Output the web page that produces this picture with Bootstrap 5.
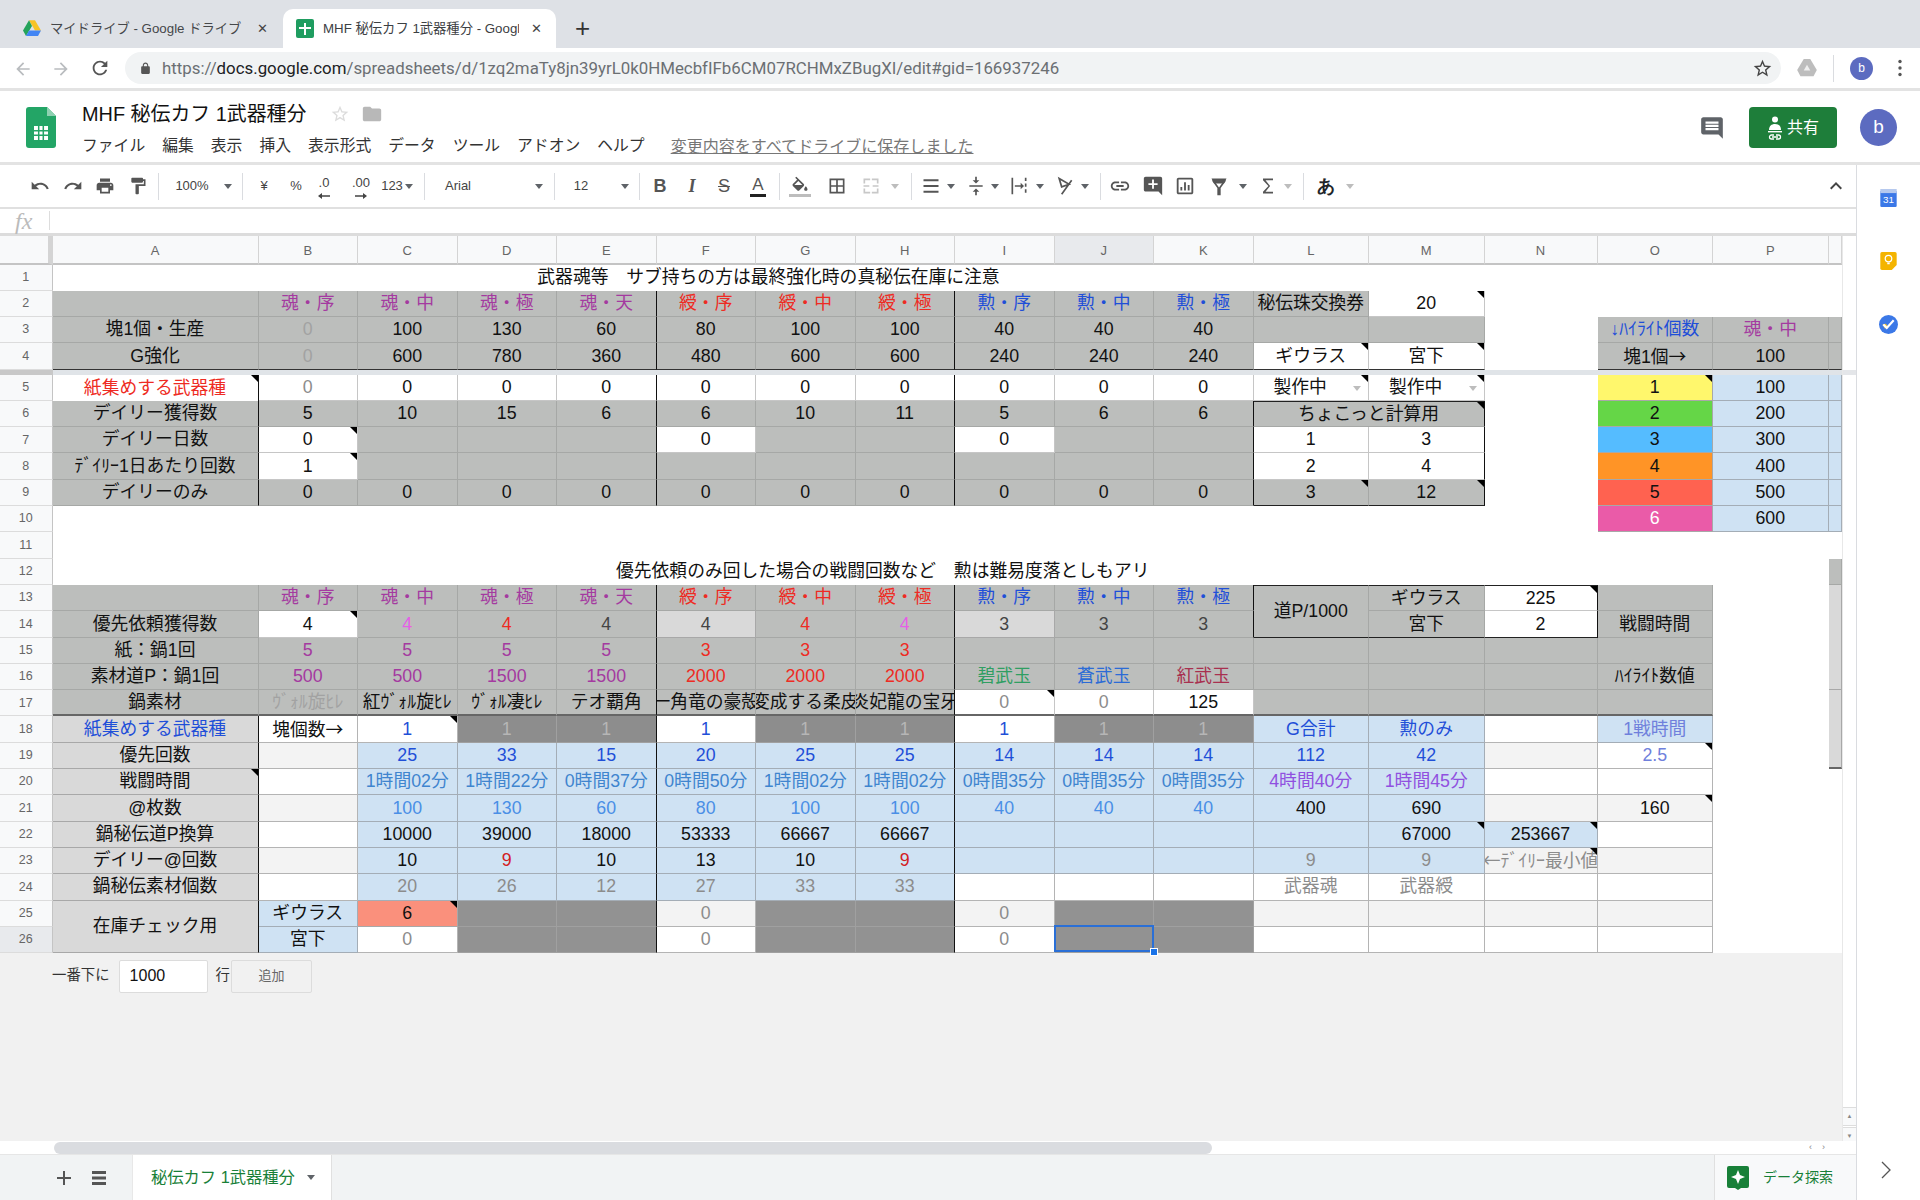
<!DOCTYPE html>
<html lang="ja"><head><meta charset="utf-8"><title>MHF 秘伝カフ 1武器種分</title>
<link href="https://cdn.jsdelivr.net/npm/bootstrap@5.3.0/dist/css/bootstrap.min.css" rel="stylesheet">
<style>
html,body{margin:0;height:1200px;width:1920px;overflow:hidden;background:#fff}
body{font-family:"Liberation Sans","Noto Sans CJK JP",sans-serif;color:#202124}
.tabstrip{height:48px;background:#dee1e6;padding-left:5px}
.btab{height:39px;margin-top:9px;width:273px;color:#45474a;font-size:13.3px;padding-left:13px;position:relative}
.btab.on{background:#fff;border-radius:10px 10px 0 0;color:#3c4043}
.btab .tt{width:196px;overflow:hidden;white-space:nowrap;margin-left:9px}
.btab .xx{margin-left:12px;font-size:13px;color:#444}
.tab1{width:278px;padding-left:18px}
.tab1 .tt{width:195px;margin-left:9px}
.plus{font-size:26px;color:#333;margin-left:19px;margin-top:9px;line-height:39px}
.addr{height:43px;border-bottom:3px solid #e3e3e3;padding-left:13px}
.omni{width:1656px;height:32px;background:#f1f3f4;border-radius:16px;margin-left:14px;padding-left:14px;font-size:16.85px;color:#6b6f73;font-family:Roboto,"Liberation Sans",sans-serif}
.omni b{font-weight:400;color:#202124}
.omurl{padding-top:1px;margin-left:2px}
.omstar{margin-right:8px}
.navb{width:38px}
.dochead{height:74px;border-bottom:3px solid #e3e3e3;padding-left:26px;position:relative}
.titl{font-size:19.9px;line-height:26px;color:#111;white-space:nowrap}
.fold{margin-left:11px}
.mnu{font-size:15.8px;color:#333;line-height:20px;margin-top:9px;white-space:nowrap}
.headcol{margin-left:26px;padding-top:10px;flex:1 1 auto}
.mi1{margin-right:17px}
.saved{color:#777;text-decoration:underline;margin-left:26px;font-size:16.05px}
.sharebtn{width:88px;height:41px;background:#1e7e3a;border:0;color:#fff;font-size:16px;border-radius:4px;margin-left:24px}
.ava{width:37px;height:37px;border-radius:50%;background:#5c6bc0;color:#fff;font-size:19px;margin-left:23px;margin-right:23px}
.ava2{width:23px;height:23px;border-radius:50%;background:#5c6bc0;color:#fff;font-size:12px}
.lower{height:1035px}
.leftpane{width:1856px;flex:none}
.sidebar{width:64px;border-left:1px solid #dadce0;position:relative;padding-top:24px}
.toolb{height:44px;border-bottom:2px solid #e0e0e0;font-size:13px;color:#444;font-family:"Liberation Sans",sans-serif}
.ti{width:0;flex:none;display:flex;justify-content:center;align-items:center;white-space:nowrap}
.ti>*{flex:none}
.d14{margin-left:14px}.d15{margin-left:15px}.d16{margin-left:16px}.d17{margin-left:17px}.d19{margin-left:19px}.d20{margin-left:20px}.d21{margin-left:21px}.d22{margin-left:22px}.d23{margin-left:23px}.d24{margin-left:24px}.d25{margin-left:25px}.d27{margin-left:27px}.d28{margin-left:28px}.d31{margin-left:31px}.d32{margin-left:32px}.d33{margin-left:33px}.d34{margin-left:34px}.d36{margin-left:36px}.d37{margin-left:37px}.d40{margin-left:40px}.d44{margin-left:44px}.d81{margin-left:81px}.d486{margin-left:486px}
.spl{display:block;width:1px;height:27px;background:#dadce0}
.ar{display:block;flex:none;width:0;height:0;border-left:4px solid transparent;border-right:4px solid transparent;border-top:5px solid #5f6368}
.ar.lt{border-top-color:#bdbdbd}
.fsb{font-weight:700;font-size:18px;color:#555}
.fsi{font-style:italic;font-size:18px;font-family:"Liberation Serif",serif;font-weight:700;color:#555}
.fss{font-size:18px;text-decoration:line-through;color:#555}
.fsa{font-size:17px;color:#555;border-bottom:3px solid #222;line-height:18px;padding:0 2px}
.fx{height:26.5px;border-bottom:3px solid #dcdcdc;padding-left:15px;font-family:"Liberation Serif",serif;font-style:italic;font-size:24px;color:#bbb}
.fxsep{width:1px;height:19px;background:#ddd;margin-left:17px}
.body2{height:905.5px}
.area{width:1842px;flex:none;background:#f1f1f1}
.vsc{width:14px;flex:none;background:#fff;border-left:1px solid #e8e8e8;font-size:6px;color:#888;text-align:center}
.vband{height:5.5px;background:#e4e6e9;margin-top:134px;margin-bottom:732px}
.varr{height:19px;line-height:17px;border-top:1px solid #ddd;border-bottom:1px solid #ddd;background:#f8f9fa;margin-bottom:1px}
#sh{width:1842px;table-layout:fixed;border-collapse:separate;border-spacing:0;background:#fff;font-size:17.8px;color:#111}
.ch{width:52.5px}.ca{width:206px}.cb{width:99.5px}.cl{width:115.5px}.cn{width:113px}.cq{width:13.5px}
#sh tr{height:26.3px}
#sh tr.hd{height:29px}
#sh tr.r5{height:25.7px}
#sh tr.frz{height:5.5px}
#sh td{padding:1px 0 0;overflow:hidden;white-space:nowrap;text-align:center;vertical-align:middle;line-height:1;border-right:1px solid #a6a8a6;border-bottom:1px solid #a6a8a6;background-clip:padding-box}
#sh th{font-weight:400;font-size:12.5px;color:#666;background:#f8f9fa;text-align:center;border-right:1px solid #c4c4c4;border-bottom:1px solid #dcdcdc;padding:0;line-height:1}
#sh tr.hd th{font-size:13px;border-bottom:2px solid #c4c4c4;border-right-color:#d4d4d4;padding-top:2px}
#sh th.corner{border-right:5px solid #bdbdbd;background:#f8f9fa}
#sh th.act{background:#e8eaed}
#sh tr.frz th{background:#c8c8c8;border:0}
#sh tr.frz td{background:#e0e4e8;border:0;padding:0}
#sh td.g{background:#bcbebc}
#sh td.w{background:#fff;border-color:#c6c6c6}
#sh td.n{background:#fff;border:0}
#sh td.lb{background:#cfe2f3;border-color:#a4adb6}
#sh td.lg{background:#d9d9d9;border-color:#a8a8a8}
#sh td.f3{background:#f3f3f3;border-color:#b4b4b4}
#sh td.wb{background:#fff;border-color:#b4b4b4}
#sh td.dk{background:#929292;border-color:#a0a0a0;color:#b6b6b6}
#sh td.dkk{background:#8d8d8d;border-color:#a0a0a0;color:#b6b6b6}
#sh td.sal{background:#fa907c;border-color:#a8a8a8}
#sh td.yel{background:#fff76c;border-color:#a8a8a8}
#sh td.grn{background:#65d647;border-color:#a8a8a8}
#sh td.sky{background:#55bcff;border-color:#a8a8a8}
#sh td.org{background:#ff9426;border-color:#a8a8a8}
#sh td.red2{background:#ff6250;border-color:#a8a8a8}
#sh td.pnk{background:#ea5ba8;border-color:#a8a8a8;color:#fff}
#sh td.xr{border-right:1.5px solid #111}
#sh td.xb{border-bottom:1.5px solid #222}
#sh td.xt{border-top:1.5px solid #222}
#sh tr.ub td:not(.n){border-bottom:1.5px solid #333}
#sh tr.ub2 td:not(.n){border-bottom:2px solid #666}
.cj{font-family:"Noto Sans CJK JP",sans-serif}
.pu{color:#a43aa0}.rd{color:#ee2b23}.bl{color:#1f4fd8}.cf{color:#4a8fe6}.tm{color:#3f85cf}.vi{color:#9050e0}.pk{color:#e55fe6}.mg{color:#8c8c8c}.ggy{color:#a2a2a2}.dg{color:#444}.gr{color:#2f9e62}.sb{color:#2b6bd6}.cr2{color:#a8304f}.per{color:#6f80dc}.r9{color:#d3201f}
.cr{position:relative}
.cr::after{content:"";position:absolute;top:0;right:0;border-top:7px solid #000;border-left:7px solid transparent}
.ovf{display:flex;justify-content:center}
.ovf span{flex:none}
.dd{padding:0 7px 0 20px}
#sh td.sel{position:relative;overflow:visible}
.selb{position:absolute;left:-1px;top:-2px;right:-1px;bottom:0;border:2.5px solid #2a6fd6;z-index:3}
.selh{position:absolute;right:-5px;bottom:-4px;width:8px;height:8px;background:#1a73e8;border:1px solid #fff;z-index:4}
.addrow{height:33px;margin-top:6.5px;padding-left:52px;font-size:14.4px;color:#333}
.addinp{width:89px;height:33px;margin-left:9px;border:1px solid #dcdcdc;background:#fff;padding:0 0 0 10px;border-radius:2px;font-size:16px;color:#111;font-family:"Liberation Sans",sans-serif}
.addbtn{width:81px;height:33px;background:#f1f1f1;border:1px solid #dcdcdc;border-radius:2px;color:#666;font-size:13px;padding:0;margin-left:1px}
.hsc{height:13px;background:#fff;position:relative;padding-left:54px}
.hsc .thumb{display:block;width:1158px;height:12px;border-radius:6px;background:#dadce0;margin-top:1px}
.hscl{font-size:9px;color:#888;margin-left:597px}
.tabsb{height:46px;background:#f1f3f4;border-top:1px solid #e6e6e6;padding-left:57px;font-size:16.3px;color:#188038}
.rowi{margin-left:20px}
.shtab{width:200px;height:46px;background:#fff;margin-left:25px;padding-left:18px;white-space:nowrap;border-right:1px solid #e0e0e0;border-left:1px solid #e8e8e8}
.shtab .ar{margin-left:12px}
.expl{width:142px;height:46px;background:#f8f9fa;border-left:1px solid #e0e0e0;font-size:14px;padding-left:12px;margin-left:auto;white-space:nowrap}
.explico{margin-right:14px}
.sideic{display:block;margin:0 auto 45px}
.chev{position:absolute;bottom:20px;left:23px}
</style></head><body>

<div class="tabstrip d-flex">
 <div class="btab tab1 d-flex align-items-center">
  <svg width="18" height="17" viewBox="0 0 24 22"><path fill="#f7c325" d="M8 0h8l8 13.500h-8z"/><path fill="#24a35a" d="M8 0L0 13.500 4 21l8-13.500z"/><path fill="#4285f4" d="M4 21h16l4-7.500H8z"/></svg>
  <span class="tt">マイドライブ - Google ドライブ</span><span class="xx">✕</span>
 </div>
 <div class="btab on d-flex align-items-center">
  <svg width="18" height="19" viewBox="0 0 18 19"><rect width="18" height="19" rx="2" fill="#1f9d60"/><path fill="#fff" d="M8 4h2v4h5v2h-5v6H8v-6H3V8h5z"/></svg>
  <span class="tt">MHF 秘伝カフ 1武器種分 - Google</span><span class="xx">✕</span>
 </div>
 <span class="plus">+</span>
</div>

<div class="addr d-flex align-items-center">
 <span class="navb"><svg width="20" height="20" viewBox="0 0 24 24" fill="#b9bcbf"><path d="M20 11H7.830l5.590-5.590L12 4l-8 8 8 8 1.410-1.410L7.830 13H20v-2z"/></svg></span>
 <span class="navb"><svg width="20" height="20" viewBox="0 0 24 24" fill="#b9bcbf"><path d="M12 4l-1.410 1.410L16.170 11H4v2h12.170l-5.580 5.590L12 20l8-8z"/></svg></span>
 <svg width="22" height="22" viewBox="0 0 24 24" fill="#555"><path d="M17.650 6.350C16.200 4.900 14.210 4 12 4c-4.420 0-7.990 3.580-7.990 8s3.570 8 7.990 8c3.730 0 6.840-2.550 7.730-6h-2.080c-.82 2.330-3.040 4-5.650 4-3.310 0-6-2.690-6-6s2.690-6 6-6c1.660 0 3.140.69 4.220 1.780L13 11h7V4l-2.350 2.350z"/></svg>
 <div class="omni d-flex align-items-center">
  <svg width="13" height="13" viewBox="0 0 24 24" fill="#555" class="me-2"><path d="M18 8h-1V6c0-2.760-2.240-5-5-5S7 3.240 7 6v2H6c-1.100 0-2 .9-2 2v10c0 1.100.9 2 2 2h12c1.100 0 2-.9 2-2V10c0-1.100-.9-2-2-2zm-3 0H9V6c0-1.660 1.340-3 3-3s3 1.340 3 3v2z"/></svg>
  <span class="flex-grow-1 omurl">https://<b>docs.google.com</b>/spreadsheets/d/1zq2maTy8jn39yrL0k0HMecbfIFb6CM07RCHMxZBugXI/edit#gid=166937246</span>
  <svg width="21" height="21" viewBox="0 0 24 24" fill="#444" class="omstar"><path d="M22 9.240l-7.190-.62L12 2 9.190 8.630 2 9.240l5.460 4.730L5.820 21 12 17.270 18.180 21l-1.630-7.030L22 9.240zM12 15.400l-3.760 2.270 1-4.280-3.320-2.880 4.380-.38L12 6.100l1.710 4.040 4.380.38-3.320 2.880 1 4.280L12 15.400z"/></svg>
 </div>
 <svg width="20" height="18" viewBox="0 0 24 22" class="ms-3"><path fill="#bdbdbd" d="M8 0h8l8 13.500-4 7.500H4l-4-7.500z"/><path fill="#efefef" d="M12 7l-4 7h8z"/></svg>
 <span class="spl ms-3"></span>
 <span class="ava2 d-flex align-items-center justify-content-center ms-3">b</span>
 <svg width="6" height="18" viewBox="0 0 6 18" fill="#555" class="ms-4"><circle cx="3" cy="2.500" r="1.700"/><circle cx="3" cy="9" r="1.700"/><circle cx="3" cy="15.500" r="1.700"/></svg>
</div>

<div class="dochead d-flex align-items-start">
 <svg width="30" height="41" viewBox="0 0 30 41" class="mt-3"><path fill="#23a566" d="M3 0h18l9 9v29a3 3 0 0 1-3 3H3a3 3 0 0 1-3-3V3a3 3 0 0 1 3-3z"/><path fill="#8ed1b1" d="M21 0l9 9h-9z"/><path fill="#fff" d="M8 19h14v14H8z"/><path stroke="#23a566" stroke-width="1.500" d="M12.700 19v14M17.300 19v14M8 23.700h14M8 28.300h14"/></svg>
 <div class="headcol">
  <div class="titl d-flex align-items-center">MHF 秘伝カフ 1武器種分
   <svg width="20" height="20" viewBox="0 0 24 24" fill="#dcdcdc" class="ms-4"><path d="M22 9.240l-7.190-.62L12 2 9.190 8.630 2 9.240l5.460 4.730L5.820 21 12 17.270 18.180 21l-1.630-7.030L22 9.240zM12 15.400l-3.760 2.270 1-4.280-3.320-2.880 4.380-.38L12 6.100l1.710 4.040 4.380.38-3.320 2.880 1 4.280L12 15.400z"/></svg>
   <svg width="22" height="22" viewBox="0 0 24 24" fill="#b8b8b8" class="fold"><path d="M10 4H4c-1.100 0-1.990.9-1.990 2L2 18c0 1.100.9 2 2 2h16c1.100 0 2-.9 2-2V8c0-1.100-.9-2-2-2h-8l-2-2z"/></svg>
  </div>
  <div class="mnu d-flex"><span class="mi1">ファイル</span><span class="mi1">編集</span><span class="mi1">表示</span><span class="mi1">挿入</span><span class="mi1">表示形式</span><span class="mi1">データ</span><span class="mi1">ツール</span><span class="mi1">アドオン</span><span>ヘルプ</span><span class="saved">変更内容をすべてドライブに保存しました</span></div>
 </div>
 <div class="d-flex align-items-center mt-3">
  <svg width="26" height="26" viewBox="0 0 24 24" fill="#5f6368"><path d="M21.990 4c0-1.100-.89-2-1.990-2H4c-1.100 0-2 .9-2 2v12c0 1.100.9 2 2 2h14l4 4-.01-18zM18 14H6v-2h12v2zm0-3H6V9h12v2zm0-3H6V6h12v2z"/></svg>
  <button class="sharebtn d-flex align-items-center justify-content-center gap-1"><svg width="16" height="24" viewBox="0 0 16 24" fill="#fff"><circle cx="8" cy="3.500" r="3"/><path d="M2 14c0-4 2.500-6 6-6s6 2 6 6z"/><rect x="1" y="15" width="14" height="1.400"/><path fill="none" stroke="#fff" stroke-width="1.300" d="M7 19h-2.500a2 2 0 0 0 0 4H7M9 19h2.500a2 2 0 0 1 0 4H9M5 21h6"/></svg>共有</button>
  <span class="ava d-flex align-items-center justify-content-center">b</span>
 </div>
</div>

<div class="lower d-flex">
 <div class="leftpane">
  <div class="toolb d-flex align-items-center">
   <span class="ti d40"><svg width="20" height="20" viewBox="0 0 24 24" fill="#555"><path d="M12.500 8c-2.650 0-5.050.99-6.900 2.600L2 7v9h9l-3.620-3.620c1.390-1.160 3.160-1.880 5.120-1.880 3.540 0 6.550 2.310 7.600 5.500l2.370-.78C21.080 11.030 17.150 8 12.500 8z"/></svg></span>
   <span class="ti d33"><svg width="20" height="20" viewBox="0 0 24 24" fill="#555"><path d="M18.400 10.600C16.550 8.990 14.150 8 11.500 8c-4.650 0-8.580 3.030-9.960 7.220L3.900 16c1.050-3.190 4.050-5.500 7.600-5.500 1.950 0 3.730.72 5.120 1.880L13 16h9V7l-3.600 3.600z"/></svg></span>
   <span class="ti d32"><svg width="20" height="20" viewBox="0 0 24 24" fill="#555"><path d="M19 8H5c-1.660 0-3 1.340-3 3v6h4v4h12v-4h4v-6c0-1.660-1.340-3-3-3zm-3 11H8v-5h8v5zm3-7c-.55 0-1-.45-1-1s.45-1 1-1 1 .45 1 1-.45 1-1 1zm-1-9H6v4h12V3z"/></svg></span>
   <span class="ti d33"><svg width="20" height="20" viewBox="0 0 24 24" fill="#555"><path d="M18 4V3c0-.55-.45-1-1-1H5c-.55 0-1 .45-1 1v4c0 .55.45 1 1 1h12c.55 0 1-.45 1-1V6h1v4H9v11c0 .55.45 1 1 1h2c.55 0 1-.45 1-1v-9h8V4h-3z"/></svg></span>
   <span class="ti d20"><span class="spl"></span></span>
   <span class="ti d34">100%</span>
   <span class="ti d36"><span class="ar"></span></span>
   <span class="ti d14"><span class="spl"></span></span>
   <span class="ti d22">¥</span>
   <span class="ti d32">%</span>
   <span class="ti d28 flex-column"><span>.0</span><svg width="12" height="6" viewBox="0 0 12 6" fill="#444"><path d="M12 2.300H4V0L0 3l4 3V3.700h8z"/></svg></span>
   <span class="ti d37 flex-column"><span>.00</span><svg width="12" height="6" viewBox="0 0 12 6" fill="#444"><path d="M0 2.300h8V0l4 3-4 3V3.700H0z"/></svg></span>
   <span class="ti d31">123</span>
   <span class="ti d17"><span class="ar"></span></span>
   <span class="ti d15"><span class="spl"></span></span>
   <span class="ti d34">Arial</span>
   <span class="ti d81"><span class="ar"></span></span>
   <span class="ti d15"><span class="spl"></span></span>
   <span class="ti d27">12</span>
   <span class="ti d44"><span class="ar"></span></span>
   <span class="ti d14"><span class="spl"></span></span>
   <span class="ti d21 fsb">B</span>
   <span class="ti d32 fsi">I</span>
   <span class="ti d32 fss">S</span>
   <span class="ti d34"><span class="fsa">A</span></span>
   <span class="ti d21"><span class="spl"></span></span>
   <span class="ti d21 flex-column"><svg width="20" height="18" viewBox="0 0 24 20" fill="#555"><path d="M16.560 8.940L7.620 0 6.210 1.410l2.380 2.380-5.150 5.150c-.59.59-.59 1.540 0 2.120l5.500 5.500c.29.29.68.44 1.060.44s.77-.15 1.060-.44l5.500-5.500c.59-.58.59-1.530 0-2.120zM5.210 10L10 5.210 14.790 10H5.210zM19 11.500s-2 2.170-2 3.500c0 1.100.9 2 2 2s2-.9 2-2c0-1.330-2-3.500-2-3.500z"/></svg><svg width="22" height="3"><rect width="22" height="3" fill="#bdbdbd"/></svg></span>
   <span class="ti d37"><svg width="20" height="20" viewBox="0 0 24 24" fill="#555"><path d="M3 3v18h18V3H3zm8 16H5v-6h6v6zm0-8H5V5h6v6zm8 8h-6v-6h6v6zm0-8h-6V5h6v6z"/></svg></span>
   <span class="ti d34"><svg width="20" height="20" viewBox="0 0 24 24" fill="#c8c8c8"><path d="M3 3h8v2H5v4H3zm10 0h8v6h-2V5h-6zM3 15h2v4h6v2H3zm16 0h2v6h-8v-2h6zM3 11h7v2H3zm11 0h7v2h-7z"/></svg></span>
   <span class="ti d24"><span class="ar lt"></span></span>
   <span class="ti d16"><span class="spl"></span></span>
   <span class="ti d20"><svg width="20" height="20" viewBox="0 0 24 24" fill="#555"><path d="M3 4h18v2.400H3zM3 10.800h18v2.400H3zM3 17.600h18V20H3z"/></svg></span>
   <span class="ti d20"><span class="ar"></span></span>
   <span class="ti d25"><svg width="20" height="22" viewBox="0 0 24 24" fill="#555"><path d="M8 19h3v4h2v-4h3l-4-4-4 4zm8-14h-3V1h-2v4H8l4 4 4-4zM4 11v2h16v-2H4z"/></svg></span>
   <span class="ti d19"><span class="ar"></span></span>
   <span class="ti d24"><svg width="20" height="22" viewBox="0 0 24 24" fill="#555"><path d="M3 2h2v20H3zM19 2h2v4h-2zM19 9h2v4h-2zM19 16h2v4h-2zM7 11h7V8l4 4-4 4v-3H7z"/></svg></span>
   <span class="ti d21"><span class="ar"></span></span>
   <span class="ti d25"><svg width="20" height="22" viewBox="0 0 24 24" fill="none" stroke="#555" stroke-width="2"><path d="M5 3l12 7-9 3zM20 5L8 22"/></svg></span>
   <span class="ti d20"><span class="ar"></span></span>
   <span class="ti d15"><span class="spl"></span></span>
   <span class="ti d20"><svg width="22" height="22" viewBox="0 0 24 24" fill="#555"><path d="M3.900 12c0-1.710 1.390-3.100 3.100-3.100h4V7H7c-2.760 0-5 2.240-5 5s2.240 5 5 5h4v-1.900H7c-1.710 0-3.100-1.390-3.100-3.100zM8 13h8v-2H8v2zm9-6h-4v1.900h4c1.710 0 3.100 1.390 3.100 3.100s-1.390 3.100-3.100 3.100h-4V17h4c2.760 0 5-2.240 5-5s-2.240-5-5-5z"/></svg></span>
   <span class="ti d33"><svg width="22" height="24" viewBox="0 0 24 24" fill="#555"><path d="M21.990 4c0-1.100-.89-2-1.990-2H4c-1.100 0-2 .9-2 2v12c0 1.100.9 2 2 2h14l4 4-.01-18zM17 11h-4v4h-2v-4H7V9h4V5h2v4h4v2z"/></svg></span>
   <span class="ti d32"><svg width="22" height="22" viewBox="0 0 24 24" fill="#555"><path d="M19 3H5c-1.100 0-2 .9-2 2v14c0 1.100.9 2 2 2h14c1.100 0 2-.9 2-2V5c0-1.100-.9-2-2-2zm0 16H5V5h14v14zM7 13h2v4H7zM11 8h2v9h-2zM15 11h2v6h-2z"/></svg></span>
   <span class="ti d34"><svg width="20" height="22" viewBox="0 0 24 24"><path fill="#555" d="M3 3h18l-3 6H6z"/><path fill="none" stroke="#555" stroke-width="2" d="M4.500 5l6.500 9v8h2v-8l6.500-9"/></svg></span>
   <span class="ti d24"><span class="ar"></span></span>
   <span class="ti d25"><svg width="20" height="22" viewBox="0 0 24 24" fill="#555"><path d="M18 3H6v2l6.500 7L6 19v2h12v-2h-9l5.500-7L9 5h9z"/></svg></span>
   <span class="ti d20"><span class="ar lt"></span></span>
   <span class="ti d15"><span class="spl"></span></span>
   <span class="ti d23 fsb"><span class="text-dark">あ</span></span>
   <span class="ti d24"><span class="ar lt"></span></span>
   <span class="ti d486"><svg width="24" height="24" viewBox="0 0 24 24" fill="#444"><path d="M7.410 15.410L12 10.830l4.590 4.580L18 14l-6-6-6 6z"/></svg></span>
  </div>
  <div class="fx d-flex align-items-center"><span>fx</span><span class="fxsep"></span></div>
  <div class="body2 d-flex">
   <div class="area">
    <table id="sh">
     <colgroup><col class="ch"><col class="ca"><col class="cb"><col class="cb"><col class="cb"><col class="cb"><col class="cb"><col class="cb"><col class="cb"><col class="cb"><col class="cb"><col class="cb"><col class="cl"><col class="cl"><col class="cn"><col class="cl"><col class="cl"><col class="cq"></colgroup>
     <tr class="hd"><th class="corner"></th><th>A</th><th>B</th><th>C</th><th>D</th><th>E</th><th>F</th><th>G</th><th>H</th><th>I</th><th class="act">J</th><th>K</th><th>L</th><th>M</th><th>N</th><th>O</th><th>P</th><th></th></tr>
     <tr><th>1</th><td class="n" colspan="13">武器魂等　サブ持ちの方は最終強化時の真秘伝在庫に注意</td><td class="n"></td><td class="n"></td><td class="n"></td><td class="n"></td></tr>
     <tr><th>2</th><td class="g"></td><td class="g pu">魂・序</td><td class="g pu">魂・中</td><td class="g pu">魂・極</td><td class="g pu xr">魂・天</td><td class="g rd">綬・序</td><td class="g rd">綬・中</td><td class="g rd xr">綬・極</td><td class="g bl">勲・序</td><td class="g bl">勲・中</td><td class="g bl">勲・極</td><td class="g">秘伝珠交換券</td><td class="w cr">20</td><td class="n"></td><td class="n"></td><td class="n"></td><td class="n"></td></tr>
     <tr><th>3</th><td class="g">塊1個・生産</td><td class="g ggy">0</td><td class="g">100</td><td class="g">130</td><td class="g xr">60</td><td class="g">80</td><td class="g">100</td><td class="g xr">100</td><td class="g">40</td><td class="g">40</td><td class="g">40</td><td class="g"></td><td class="g"></td><td class="n"></td><td class="g bl">↓ﾊｲﾗｲﾄ個数</td><td class="g pu">魂・中</td><td class="g"></td></tr>
     <tr class="ub"><th>4</th><td class="g">G強化</td><td class="g ggy">0</td><td class="g">600</td><td class="g">780</td><td class="g xr">360</td><td class="g">480</td><td class="g">600</td><td class="g xr">600</td><td class="g">240</td><td class="g">240</td><td class="g">240</td><td class="w cr">ギウラス</td><td class="w cr">宮下</td><td class="n"></td><td class="g">塊1個<span class="cj">→</span></td><td class="g">100</td><td class="g"></td></tr>
     <tr class="frz"><th></th><td colspan="17"></td></tr>
     <tr class="r5"><th>5</th><td class="n rd cr xr">紙集めする武器種</td><td class="w mg">0</td><td class="w">0</td><td class="w">0</td><td class="w xr">0</td><td class="w">0</td><td class="w">0</td><td class="w xr">0</td><td class="w">0</td><td class="w">0</td><td class="w">0</td><td class="w cr"><div class="dd d-flex justify-content-between align-items-center"><span>製作中</span><span class="ar lt"></span></div></td><td class="w cr"><div class="dd d-flex justify-content-between align-items-center"><span>製作中</span><span class="ar lt"></span></div></td><td class="n"></td><td class="yel cr">1</td><td class="lb">100</td><td class="lb"></td></tr>
     <tr><th>6</th><td class="g xr">デイリー獲得数</td><td class="g">5</td><td class="g">10</td><td class="g">15</td><td class="g xr">6</td><td class="g">6</td><td class="g">10</td><td class="g xr">11</td><td class="g">5</td><td class="g">6</td><td class="g xr">6</td><td class="g xr xt cr" colspan="2">ちょこっと計算用</td><td class="n"></td><td class="grn">2</td><td class="lb">200</td><td class="lb"></td></tr>
     <tr><th>7</th><td class="g xr">デイリー日数</td><td class="w cr">0</td><td class="g"></td><td class="g"></td><td class="g xr"></td><td class="w">0</td><td class="g"></td><td class="g xr"></td><td class="w">0</td><td class="g"></td><td class="g xr"></td><td class="w">1</td><td class="w xr">3</td><td class="n"></td><td class="sky">3</td><td class="lb">300</td><td class="lb"></td></tr>
     <tr><th>8</th><td class="g xr">ﾃﾞｲﾘｰ1日あたり回数</td><td class="w cr">1</td><td class="g"></td><td class="g"></td><td class="g xr"></td><td class="g"></td><td class="g"></td><td class="g xr"></td><td class="g"></td><td class="g"></td><td class="g xr"></td><td class="w">2</td><td class="w xr">4</td><td class="n"></td><td class="org">4</td><td class="lb">400</td><td class="lb"></td></tr>
     <tr><th>9</th><td class="g xr">デイリーのみ</td><td class="g">0</td><td class="g">0</td><td class="g">0</td><td class="g xr">0</td><td class="g">0</td><td class="g">0</td><td class="g xr">0</td><td class="g">0</td><td class="g">0</td><td class="g xr">0</td><td class="g xb cr">3</td><td class="g xr xb cr">12</td><td class="n"></td><td class="red2">5</td><td class="lb">500</td><td class="lb"></td></tr>
     <tr><th>10</th><td class="n" colspan="14"></td><td class="pnk">6</td><td class="lb">600</td><td class="lb"></td></tr>
     <tr><th>11</th><td class="n" colspan="17"></td></tr>
     <tr><th>12</th><td class="n" colspan="15">優先依頼のみ回した場合の戦闘回数など　勲は難易度落としもアリ</td><td class="n"></td><td class="g"></td></tr>
     <tr><th>13</th><td class="g"></td><td class="g pu">魂・序</td><td class="g pu">魂・中</td><td class="g pu">魂・極</td><td class="g pu xr">魂・天</td><td class="g rd">綬・序</td><td class="g rd">綬・中</td><td class="g rd xr">綬・極</td><td class="g bl">勲・序</td><td class="g bl">勲・中</td><td class="g bl xr">勲・極</td><td class="g xt xb" rowspan="2">道P/1000</td><td class="g xt">ギウラス</td><td class="w xt xr cr">225</td><td class="g"></td><td class="n"></td><td class="lg" rowspan="4"></td></tr>
     <tr><th>14</th><td class="g">優先依頼獲得数</td><td class="w cr">4</td><td class="g pk">4</td><td class="g rd">4</td><td class="g dg xr">4</td><td class="lg dg">4</td><td class="g rd">4</td><td class="g pk xr">4</td><td class="lg dg">3</td><td class="g dg">3</td><td class="g dg xr">3</td><td class="g xb">宮下</td><td class="w xb xr">2</td><td class="g">戦闘時間</td><td class="n"></td></tr>
     <tr><th>15</th><td class="g">紙：鍋1回</td><td class="g pu">5</td><td class="g pu">5</td><td class="g pu">5</td><td class="g pu xr">5</td><td class="g rd">3</td><td class="g rd">3</td><td class="g rd xr">3</td><td class="g"></td><td class="g"></td><td class="g"></td><td class="g"></td><td class="g"></td><td class="g"></td><td class="g"></td><td class="n"></td></tr>
     <tr><th>16</th><td class="g">素材道P：鍋1回</td><td class="g pu">500</td><td class="g pu">500</td><td class="g pu">1500</td><td class="g pu xr">1500</td><td class="g rd">2000</td><td class="g rd">2000</td><td class="g rd xr">2000</td><td class="g gr">碧武玉</td><td class="g sb">蒼武玉</td><td class="g cr2">紅武玉</td><td class="g"></td><td class="g"></td><td class="g"></td><td class="g">ﾊｲﾗｲﾄ数値</td><td class="n"></td></tr>
     <tr class="ub2"><th>17</th><td class="g">鍋素材</td><td class="g ggy">ｳﾞｫﾙ旋ﾋﾚ</td><td class="g">紅ｳﾞｫﾙ旋ﾋﾚ</td><td class="g">ｳﾞｫﾙ凄ﾋﾚ</td><td class="g xr">テオ覇角</td><td class="g"><div class="ovf"><span>一角竜の豪殻</span></div></td><td class="g"><div class="ovf"><span>変成する柔皮</span></div></td><td class="g xr"><div class="ovf"><span>炎妃龍の宝牙</span></div></td><td class="w mg cr">0</td><td class="w mg">0</td><td class="w">125</td><td class="g"></td><td class="g"></td><td class="g"></td><td class="g"></td><td class="n"></td><td class="lg" rowspan="3"></td></tr>
     <tr><th>18</th><td class="lg bl xr">紙集めする武器種</td><td class="wb">塊個数<span class="cj">→</span></td><td class="wb bl cr">1</td><td class="dkk">1</td><td class="dkk xr">1</td><td class="wb bl">1</td><td class="dkk">1</td><td class="dkk xr">1</td><td class="wb bl">1</td><td class="dkk">1</td><td class="dkk">1</td><td class="lb bl">G合計</td><td class="lb bl">勲のみ</td><td class="wb"></td><td class="lb per">1戦時間</td><td class="n"></td></tr>
     <tr><th>19</th><td class="lg xr">優先回数</td><td class="f3"></td><td class="lb bl">25</td><td class="lb bl">33</td><td class="lb bl xr">15</td><td class="lb bl">20</td><td class="lb bl">25</td><td class="lb bl xr">25</td><td class="lb bl">14</td><td class="lb bl">14</td><td class="lb bl">14</td><td class="lb bl">112</td><td class="lb bl">42</td><td class="f3"></td><td class="wb per cr">2.5</td><td class="n"></td></tr>
     <tr><th>20</th><td class="lg xr cr">戦闘時間</td><td class="wb"></td><td class="lb tm">1時間02分</td><td class="lb tm">1時間22分</td><td class="lb tm xr">0時間37分</td><td class="lb tm">0時間50分</td><td class="lb tm">1時間02分</td><td class="lb tm xr">1時間02分</td><td class="lb tm">0時間35分</td><td class="lb tm">0時間35分</td><td class="lb tm">0時間35分</td><td class="lb vi">4時間40分</td><td class="lb vi">1時間45分</td><td class="wb"></td><td class="wb"></td><td class="n" colspan="2"></td></tr>
     <tr><th>21</th><td class="lg xr">@枚数</td><td class="f3"></td><td class="lb cf">100</td><td class="lb cf">130</td><td class="lb cf xr">60</td><td class="lb cf">80</td><td class="lb cf">100</td><td class="lb cf xr">100</td><td class="lb cf">40</td><td class="lb cf">40</td><td class="lb cf">40</td><td class="lb">400</td><td class="lb">690</td><td class="f3"></td><td class="f3 cr">160</td><td class="n" colspan="2"></td></tr>
     <tr><th>22</th><td class="lg xr">鍋秘伝道P換算</td><td class="wb"></td><td class="lb">10000</td><td class="lb">39000</td><td class="lb xr">18000</td><td class="lb">53333</td><td class="lb">66667</td><td class="lb xr">66667</td><td class="lb"></td><td class="lb"></td><td class="lb"></td><td class="lb"></td><td class="lb cr">67000</td><td class="lb cr">253667</td><td class="wb"></td><td class="n" colspan="2"></td></tr>
     <tr><th>23</th><td class="lg xr">デイリー@回数</td><td class="f3"></td><td class="lb">10</td><td class="lb r9">9</td><td class="lb xr">10</td><td class="lb">13</td><td class="lb">10</td><td class="lb r9 xr">9</td><td class="lb"></td><td class="lb"></td><td class="lb"></td><td class="lb mg">9</td><td class="lb mg">9</td><td class="f3 mg cr"><div class="ovf"><span><span class="cj">←</span>ﾃﾞｲﾘｰ最小値</span></div></td><td class="f3"></td><td class="n" colspan="2"></td></tr>
     <tr><th>24</th><td class="lg xr">鍋秘伝素材個数</td><td class="wb"></td><td class="lb mg">20</td><td class="lb mg">26</td><td class="lb mg xr">12</td><td class="lb mg">27</td><td class="lb mg">33</td><td class="lb mg xr">33</td><td class="wb"></td><td class="wb"></td><td class="wb"></td><td class="wb mg">武器魂</td><td class="wb mg">武器綬</td><td class="wb"></td><td class="wb"></td><td class="n" colspan="2"></td></tr>
     <tr><th>25</th><td class="lg xr" rowspan="2">在庫チェック用</td><td class="lb">ギウラス</td><td class="sal cr">6</td><td class="dk"></td><td class="dk xr"></td><td class="f3 mg">0</td><td class="dk"></td><td class="dk xr"></td><td class="f3 mg">0</td><td class="dk"></td><td class="dk"></td><td class="f3"></td><td class="f3"></td><td class="f3"></td><td class="f3"></td><td class="n" colspan="2"></td></tr>
     <tr><th class="act">26</th><td class="lb">宮下</td><td class="wb mg">0</td><td class="dk"></td><td class="dk xr"></td><td class="wb mg">0</td><td class="dk"></td><td class="dk xr"></td><td class="wb mg">0</td><td class="dk sel"><span class="selb"></span><span class="selh"></span></td><td class="dk"></td><td class="wb"></td><td class="wb"></td><td class="wb"></td><td class="wb"></td><td class="n" colspan="2"></td></tr>
    </table>
    <div class="addrow d-flex align-items-center">一番下に<input class="addinp" value="1000" aria-label="行数"><span class="ms-2">行</span><button class="addbtn">追加</button></div>
   </div>
   <div class="vsc"><div class="vband"></div><div class="varr">▲</div><div class="varr">▼</div></div>
  </div>
  <div class="hsc d-flex align-items-start"><span class="thumb"></span><span class="hscl">‹&nbsp;&nbsp;&nbsp;&nbsp;›</span></div>
  <div class="tabsb d-flex align-items-center">
   <svg width="14" height="14" viewBox="0 0 14 14" fill="#555"><path d="M6 0h2v6h6v2H8v6H6V8H0V6h6z"/></svg>
   <svg width="16" height="16" viewBox="0 0 16 16" fill="#555" class="rowi"><path d="M1 1h14v3H1zM1 6.500h14v3H1zM1 12h14v3H1z"/></svg>
   <div class="shtab d-flex align-items-center">秘伝カフ 1武器種分<span class="ar"></span></div>
   <div class="expl d-flex align-items-center"><svg width="22" height="24" viewBox="0 0 22 24" class="explico"><path fill="#188038" d="M2 0h18a2 2 0 0 1 2 2v18a2 2 0 0 1-2 2h-6l-3 2-3-2H2a2 2 0 0 1-2-2V2a2 2 0 0 1 2-2z"/><path fill="#fff" d="M11 4l2 5 5 2-5 2-2 5-2-5-5-2 5-2z"/></svg>データ探索</div>
  </div>
 </div>
 <div class="sidebar">
  <svg class="sideic" width="17" height="18" viewBox="0 0 20 22"><rect y="2" width="20" height="20" rx="1.500" fill="#3b78e7"/><rect width="20" height="5" fill="#b6c9ee"/><text x="10" y="17" font-size="12" fill="#fff" text-anchor="middle" font-family="Liberation Sans">31</text></svg>
  <svg class="sideic" width="17" height="18" viewBox="0 0 20 22"><path fill="#f4b400" d="M2 0h16a2 2 0 0 1 2 2v14l-6 6H2a2 2 0 0 1-2-2V2a2 2 0 0 1 2-2z"/><circle cx="10" cy="8" r="4" fill="none" stroke="#fff" stroke-width="1.500"/><path fill="#fff" d="M8.500 13h3v2h-3z"/></svg>
  <svg class="sideic" width="19" height="19" viewBox="0 0 22 22"><circle cx="11" cy="11" r="11" fill="#3b78e7"/><path fill="#f7c325" d="M4 11l4-1 2 3-3 3z"/><path fill="none" stroke="#fff" stroke-width="2.500" d="M5 11l4 4 8-9"/></svg>
  <svg class="chev" width="12" height="20" viewBox="0 0 12 20" fill="none" stroke="#555" stroke-width="1.300"><path d="M2 2l8 8-8 8"/></svg>
 </div>
</div>
</body></html>
